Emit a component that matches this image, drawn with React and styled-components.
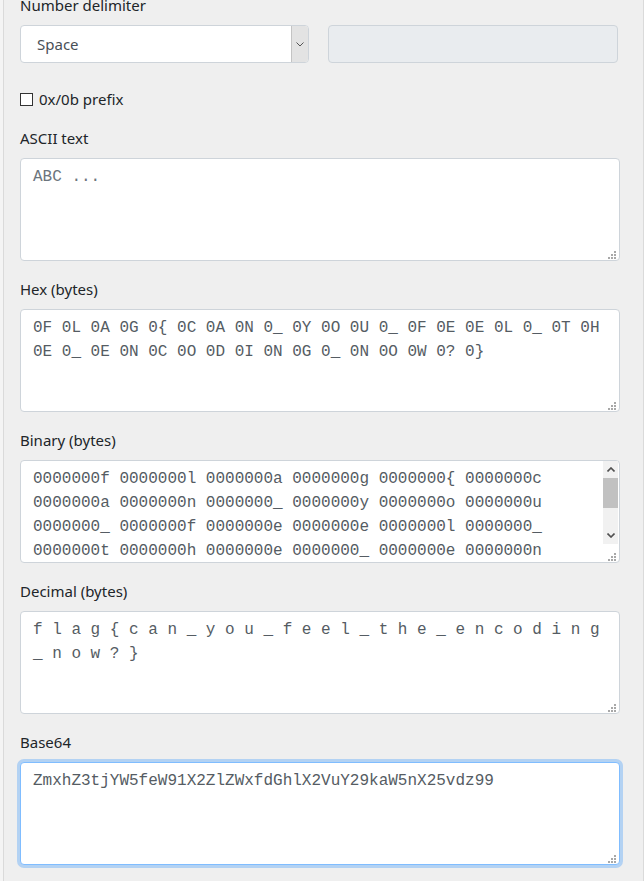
import styled, { createGlobalStyle, css } from 'styled-components';
import { useEffect, useRef } from 'react';

const HEX = `0F 0L 0A 0G 0{ 0C 0A 0N 0_ 0Y 0O 0U 0_ 0F 0E 0E 0L 0_ 0T 0H
0E 0_ 0E 0N 0C 0O 0D 0I 0N 0G 0_ 0N 0O 0W 0? 0}`;

const BINARY = `0000000f 0000000l 0000000a 0000000g 0000000{ 0000000c
0000000a 0000000n 0000000_ 0000000y 0000000o 0000000u
0000000_ 0000000f 0000000e 0000000e 0000000l 0000000_
0000000t 0000000h 0000000e 0000000_ 0000000e 0000000n
0000000c 0000000o 0000000d 0000000i 0000000n 0000000g
0000000_ 0000000n 0000000o 0000000w 0000000? 0000000}`;

const DECIMAL = `f l a g { c a n _ y o u _ f e e l _ t h e _ e n c o d i n g
_ n o w ? }`;

const BASE64 = 'ZmxhZ3tjYW5feW91X2ZlZWxfdGhlX2VuY29kaW5nX25vdz99';

function App() {
  const baseRef = useRef(null);

  useEffect(() => {
    const el = baseRef.current;
    if (el) {
      el.focus();
      el.setSelectionRange(el.value.length, el.value.length);
    }
  }, []);

  return (
    <>
      <GlobalStyle />
      <Panel>
        <FieldGroup>
          <Label>Number delimiter</Label>
          <DelimiterRow>
            <SelectWrap>
              <Select defaultValue="space">
                <option value="space">Space</option>
                <option value="comma">Comma</option>
                <option value="none">None</option>
              </Select>
              <DropButton>
                <svg width="8" height="5" viewBox="0 0 8 5">
                  <polyline points="0.5,0.5 4,4 7.5,0.5" fill="none" stroke="#555" strokeWidth="1" />
                </svg>
              </DropButton>
            </SelectWrap>
            <DisabledInput disabled />
          </DelimiterRow>
        </FieldGroup>

        <CheckRow>
          <CheckBox type="checkbox" id="prefix" />
          <CheckLabel htmlFor="prefix">0x/0b prefix</CheckLabel>
        </CheckRow>

        <TextField label="ASCII text" placeholder="ABC ..." />
        <TextField label="Hex (bytes)" value={HEX} />
        <TextField label="Binary (bytes)" value={BINARY} scroll />
        <TextField label="Decimal (bytes)" value={DECIMAL} />
        <TextField label="Base64" value={BASE64} focused inputRef={baseRef} />
      </Panel>
    </>
  );
}

function TextField({ label, value, placeholder, scroll, focused, inputRef }) {
  return (
    <FieldGroup>
      <Label>{label}</Label>
      <TextBox>
        <TextArea
          ref={inputRef}
          defaultValue={value}
          placeholder={placeholder}
          focused={focused}
          spellCheck={false}
        />
        {scroll && (
          <Scrollbar>
            <ScrollArrow>
              <svg width="8" height="5" viewBox="0 0 8 5">
                <polyline points="0.5,4.5 4,1 7.5,4.5" fill="none" stroke="#505050" strokeWidth="1.6" />
              </svg>
            </ScrollArrow>
            <ScrollTrack>
              <ScrollThumb />
            </ScrollTrack>
            <ScrollArrow>
              <svg width="8" height="5" viewBox="0 0 8 5">
                <polyline points="0.5,0.5 4,4 7.5,0.5" fill="none" stroke="#505050" strokeWidth="1.6" />
              </svg>
            </ScrollArrow>
          </Scrollbar>
        )}
        <Grip width="8" height="8" viewBox="0 0 8 8">
          <rect x="6" y="0" width="2" height="2" />
          <rect x="3" y="3" width="2" height="2" />
          <rect x="6" y="3" width="2" height="2" />
          <rect x="0" y="6" width="2" height="2" />
          <rect x="3" y="6" width="2" height="2" />
          <rect x="6" y="6" width="2" height="2" />
        </Grip>
      </TextBox>
    </FieldGroup>
  );
}

const GlobalStyle = createGlobalStyle`
  html, body {
    margin: 0;
    padding: 0;
    background: #f4f4f4;
    overflow: hidden;
  }
  body {
    font-family: "Noto Sans", "Open Sans", sans-serif;
    color: #212529;
  }
`;

const Panel = styled.div`
  margin: -7px 0 0 3px;
  min-height: calc(100vh + 7px);
  box-sizing: border-box;
  border-left: 1px solid #dadada;
  border-right: 1px solid #dadada;
  background: #efefef;
  padding: 0 23px 0 16px;
`;

const FieldGroup = styled.div`
  margin-bottom: 16px;
`;

const Label = styled.label`
  display: block;
  font-size: 15px;
  line-height: 24px;
  margin-bottom: 8px;
  color: #212529;
`;

const DelimiterRow = styled.div`
  display: grid;
  grid-template-columns: 289px 290px;
  gap: 19px;
  margin-bottom: 24px;
`;

const SelectWrap = styled.div`
  position: relative;
`;

const Select = styled.select`
  appearance: none;
  display: block;
  width: 100%;
  height: 38px;
  box-sizing: border-box;
  padding: 0 24px 0 16px;
  border: 1px solid #ced4da;
  border-radius: 4px;
  background: #fff;
  font-family: "Noto Sans", "Open Sans", sans-serif;
  font-size: 15px;
  color: #495057;
  outline: none;
`;

const DropButton = styled.span`
  position: absolute;
  top: 1px;
  right: 1px;
  bottom: 1px;
  width: 16px;
  display: flex;
  align-items: center;
  justify-content: center;
  background: #e3e3e3;
  border-left: 1px solid #c4c4c4;
  border-radius: 0 3px 3px 0;
  pointer-events: none;
`;

const DisabledInput = styled.input`
  display: block;
  width: 100%;
  height: 38px;
  box-sizing: border-box;
  border: 1px solid #ced4da;
  border-radius: 4px;
  background: #e9ecef;
`;

const CheckRow = styled.div`
  display: flex;
  align-items: center;
  gap: 6px;
  height: 24px;
  margin-bottom: 15px;
`;

const CheckBox = styled.input`
  appearance: none;
  margin: 0;
  width: 13px;
  height: 13px;
  border: 1px solid #333;
  background: #fff;
  box-sizing: border-box;
`;

const CheckLabel = styled.label`
  font-size: 15px;
  line-height: 24px;
`;

const TextBox = styled.div`
  position: relative;
  height: 103px;
`;

const TextArea = styled.textarea`
  display: block;
  width: 100%;
  height: 100%;
  box-sizing: border-box;
  margin: 0;
  padding: 6px 12px;
  border: 1px solid #ced4da;
  border-radius: 4px;
  background: #fff;
  resize: none;
  overflow: hidden;
  white-space: pre-wrap;
  font-family: "Liberation Mono", "Courier New", monospace;
  font-size: 16px;
  line-height: 24px;
  color: #555c63;
  outline: none;
  caret-color: #000;

  &::placeholder {
    color: #6c757d;
  }

  ${({ focused }) =>
    focused &&
    css`
      border-color: #80bdff;
      box-shadow: 0 0 0 3px rgba(0, 123, 255, 0.25);
    `}
`;

const Scrollbar = styled.div`
  position: absolute;
  top: 1px;
  right: 2px;
  width: 15px;
  height: 83px;
  display: flex;
  flex-direction: column;
  background: #f1f1f1;
`;

const ScrollArrow = styled.div`
  height: 17px;
  display: flex;
  align-items: center;
  justify-content: center;
`;

const ScrollTrack = styled.div`
  flex: 1;
`;

const ScrollThumb = styled.div`
  height: 30px;
  background: #c1c1c1;
`;

const Grip = styled.svg`
  position: absolute;
  right: 4px;
  bottom: 2px;
  fill: #a8a8a8;
`;

export default App;
